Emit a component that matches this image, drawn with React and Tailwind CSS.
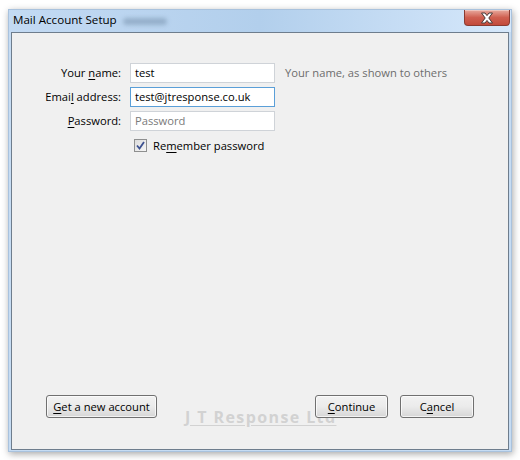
import React from 'react';

const U = ({ children }) => <span className="underline underline-offset-2">{children}</span>;

const CloseButton = () => (
    <div className="w-[46px] h-[16px] rounded-b-[4px] border border-t-0 border-[#8a3b31] bg-gradient-to-b from-[#e7a99e] via-[#cf5f50] to-[#c24a3b] flex items-center justify-center shadow-[inset_0_1px_0_rgba(255,255,255,0.35)]">
        <svg width="14" height="12" viewBox="0 0 14 12">
            <path d="M1.5 1 H5 L7 3.6 L9 1 H12.5 L8.8 6 L12.5 11 H9 L7 8.4 L5 11 H1.5 L5.2 6 Z" fill="#ffffff" stroke="#4a3a38" strokeWidth="1" strokeLinejoin="round" />
        </svg>
    </div>
);

const Field = ({ label, value, placeholder, focused }) => (
    <div className="flex items-center h-[20px]">
        <div className="w-[109px] text-right text-black">{label}</div>
        <div className={`ml-[9px] w-[145px] h-[20px] bg-white border flex items-center px-[4px] ${focused ? 'border-[#5a9fd8]' : 'border-[#cfd3d8]'}`}>
            {value ? <span className="text-black">{value}</span> : <span className="text-[#7a7a7a]">{placeholder}</span>}
        </div>
    </div>
);

const WinButton = ({ children, className = '' }) => (
    <button className={`relative z-10 h-[23px] rounded-[3px] border border-[#707070] bg-gradient-to-b from-[#f2f2f2] via-[#ebebeb] to-[#d6d6d6] text-black flex items-center justify-center shadow-[inset_0_0_0_1px_rgba(255,255,255,0.7)] ${className}`}>
        {children}
    </button>
);

export default function App() {
    return (
        <div className="w-[520px] h-[460px] bg-white pt-[9px] pl-[8px] font-['Open_Sans',sans-serif] text-[11.2px] leading-none">
            {/* Window */}
            <div className="w-[504px] h-[443px] flex flex-col bg-[#c6dcf3] border border-[#a9c2dd] shadow-[1px_2px_7px_rgba(0,0,0,0.35)]">
                {/* Title bar */}
                <div className="h-[22px] flex items-start bg-gradient-to-r from-[#c3daf3] via-[#b2cfec] to-[#d6e8fb]">
                    <div className="pl-[4px] pt-[4px] text-[11.6px] text-black">Mail Account Setup</div>
                    <div className="ml-[6px] mt-[8px] w-[44px] h-[7px] rounded-full bg-[#5d7893]/40 blur-[2px]" />
                    <div className="ml-auto mr-[1px]">
                        <CloseButton />
                    </div>
                </div>

                {/* Client area */}
                <div className="flex-1 mx-[2px] mb-[1px] bg-[#f0f0f0] border border-[#6e7d8d] flex flex-col relative">
                    {/* Watermark, behind the buttons */}
                    <div className="absolute left-[173px] top-[376px] text-[16px] font-bold text-[#d2d2d2] underline underline-offset-2 tracking-[1.4px] pointer-events-none">
                        J T Response Ltd
                    </div>

                    <div className="pt-[30px] flex flex-col gap-[4px]">
                        <div className="flex items-center">
                            <Field label={<>Your <U>n</U>ame:</>} value="test" />
                            <span className="ml-[10px] text-[#6d6d6d]">Your name, as shown to others</span>
                        </div>
                        <Field label={<>Emai<U>l</U> address:</>} value="test@jtresponse.co.uk" focused />
                        <Field label={<><U>P</U>assword:</>} placeholder="Password" />
                    </div>

                    <div className="mt-[8px] ml-[122px] flex items-center gap-[6px]">
                        <div className="w-[13px] h-[13px] border border-[#8e8f8f] bg-gradient-to-br from-[#dcdcdc] to-[#f6f6f6] flex items-center justify-center">
                            <svg width="9" height="9" viewBox="0 0 9 9">
                                <path d="M1 4.5 L3.5 7.5 L8 1" fill="none" stroke="#3c5190" strokeWidth="1.8" />
                            </svg>
                        </div>
                        <span className="text-black">Re<U>m</U>ember password</span>
                    </div>

                    <div className="mt-auto mb-[31px] px-[34px] flex items-center">
                        <WinButton className="w-[111px]"><span><U>G</U>et a new account</span></WinButton>
                        <WinButton className="w-[73px] ml-auto"><span><U>C</U>ontinue</span></WinButton>
                        <WinButton className="w-[74px] ml-[12px]"><span>C<U>a</U>ncel</span></WinButton>
                    </div>
                </div>
            </div>
        </div>
    );
}
